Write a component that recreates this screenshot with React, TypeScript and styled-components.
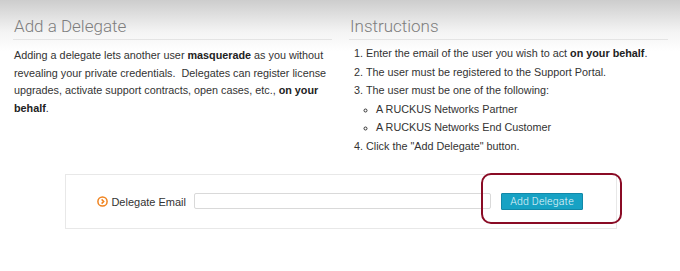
import React from "react";
import styled, { createGlobalStyle } from "styled-components";

const GlobalStyle = createGlobalStyle`
  html, body {
    margin: 0;
    padding: 0;
  }
  body {
    background: #fff;
    font-family: "Liberation Sans", Arial, sans-serif;
    font-size: 10.8px;
    color: #333;
  }
`;

export default function App() {
  return (
    <Page>
      <GlobalStyle />
      <Columns>
        <Column>
          <Heading>Add a Delegate</Heading>
          <Intro>
            Adding a delegate lets another user <strong>masquerade</strong> as
            you without revealing your private credentials.&nbsp; Delegates can
            register license upgrades, activate support contracts, open cases,
            etc., <strong>on your behalf</strong>.
          </Intro>
        </Column>
        <Column>
          <Heading>Instructions</Heading>
          <Steps>
            <li>
              Enter the email of the user you wish to act{" "}
              <strong>on your behalf</strong>.
            </li>
            <li>The user must be registered to the Support Portal.</li>
            <li>
              The user must be one of the following:
              <SubList>
                <li>A RUCKUS Networks Partner</li>
                <li>A RUCKUS Networks End Customer</li>
              </SubList>
            </li>
            <li>Click the "Add Delegate" button.</li>
          </Steps>
        </Column>
      </Columns>

      <FormPanel>
        <FieldLabel>
          <ArrowIcon />
          Delegate Email
        </FieldLabel>
        <EmailInput type="email" />
        <SubmitButton type="button">Add Delegate</SubmitButton>
        <Highlight />
      </FormPanel>
    </Page>
  );
}

function ArrowIcon() {
  return (
    <svg width="11" height="11" viewBox="0 0 11 11" style={{ flex: "none" }}>
      <circle cx="5.5" cy="5.5" r="4.6" fill="none" stroke="#f0831e" strokeWidth="1.5" />
      <path d="M4.6 3.4 L6.7 5.5 L4.6 7.6" fill="none" stroke="#f0831e" strokeWidth="1.5" />
    </svg>
  );
}

const Page = styled.div`
  height: 271px;
  overflow: hidden;
  background: linear-gradient(#cdcdcd 0px, #f4f4f4 32px, #fff 52px);
`;

const Columns = styled.div`
  display: grid;
  grid-template-columns: 319px 319px;
  column-gap: 17px;
  padding-left: 13px;
`;

const Column = styled.section`
  display: flex;
  flex-direction: column;
`;

const Heading = styled.h2`
  margin: 0;
  padding: 17px 0 4px 1px;
  font-family: Roboto, "Open Sans", sans-serif;
  font-weight: 300;
  font-size: 17px;
  line-height: 18px;
  color: #7d7d7d;
  border-bottom: 1px solid #e4e4e4;
`;

const Intro = styled.p`
  margin: 7px 0 0 1px;
  line-height: 17.5px;

  strong {
    color: #222;
  }
`;

const Steps = styled.ol`
  margin: 4px 0 0;
  padding-left: 17px;
  line-height: 18.6px;

  strong {
    color: #222;
  }
`;

const SubList = styled.ul`
  margin: 0;
  padding-left: 10px;
  list-style: circle;

  li::marker {
    font-size: 9px;
  }
`;

const FormPanel = styled.div`
  position: relative;
  box-sizing: border-box;
  display: flex;
  align-items: center;
  width: 552px;
  height: 55px;
  margin: 18px 0 0 65px;
  border: 1px solid #e8e8e8;
`;

const FieldLabel = styled.label`
  display: flex;
  align-items: center;
  justify-content: flex-end;
  gap: 3px;
  box-sizing: border-box;
  width: 120px;
  padding-top: 1px;
  font-size: 11px;
  color: #333;
`;

const EmailInput = styled.input`
  box-sizing: border-box;
  width: 297px;
  height: 16px;
  margin-left: 8px;
  padding: 0 4px;
  border: 1px solid #d9d9d9;
  border-radius: 2px;
  background: #fff;
  outline: none;
`;

const SubmitButton = styled.button`
  box-sizing: border-box;
  width: 82px;
  height: 17px;
  margin-left: 10px;
  padding: 0;
  border: 1px solid #1288a8;
  border-radius: 1px;
  background: #17a2c4;
  color: #e8f6fb;
  font-family: Roboto, "Open Sans", sans-serif;
  font-weight: 300;
  font-size: 10.5px;
  line-height: 15px;
  letter-spacing: 0.2px;
  cursor: pointer;
`;

const Highlight = styled.div`
  position: absolute;
  left: 415px;
  top: -2px;
  width: 141px;
  height: 51px;
  box-sizing: border-box;
  border: 2px solid #8a0b25;
  border-radius: 10px;
  pointer-events: none;
`;
